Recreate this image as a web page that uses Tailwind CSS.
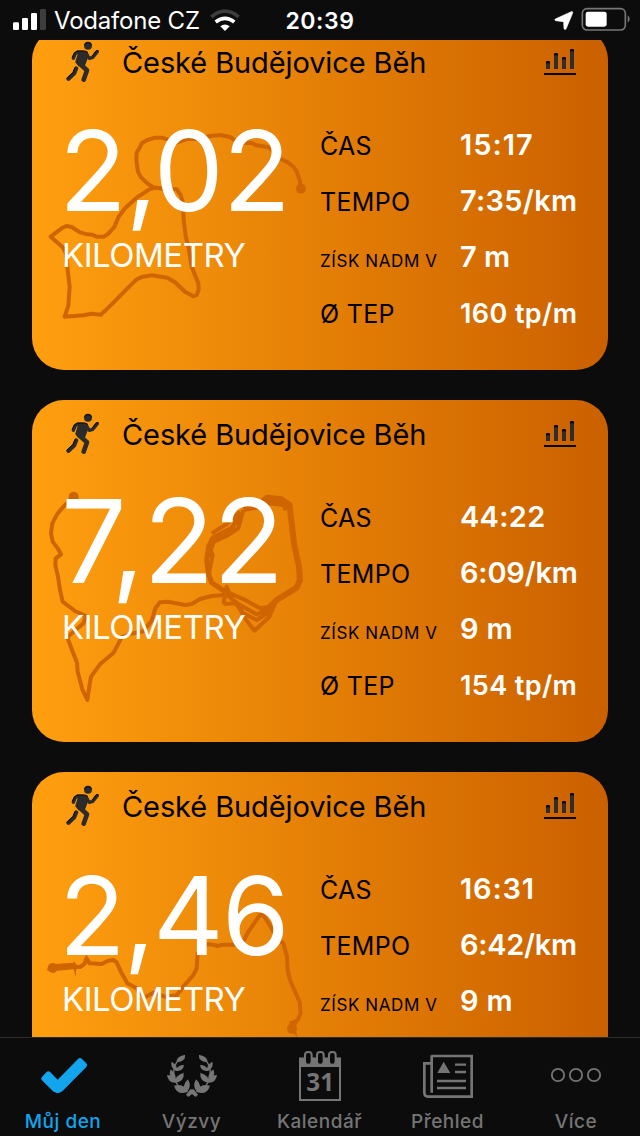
<!DOCTYPE html>
<html lang="cs">
<head>
    <meta charset="UTF-8">
    <meta name="viewport" content="width=device-width, initial-scale=1.0">
    <title>Můj den</title>
    <script src="https://cdn.jsdelivr.net/npm/@tailwindcss/browser@4"></script>
</head>
<body class="bg-[#0c0c0c] font-['Inter',sans-serif]">

    <!-- Shared icons -->
    <svg class="hidden">
        <symbol id="runner" viewBox="30 24 105 126">
            <g fill="#2b2b2b" stroke="#2b2b2b" stroke-linecap="round" stroke-linejoin="round">
                <circle cx="99" cy="38" r="12" stroke="none"/>
                <path d="M75 58 L90 60 L97 66 L86 94 L72 94 L66 86 Z" stroke-width="10"/>
                <path d="M84 58 L68 58 L61 62 L55 76" fill="none" stroke-width="10"/>
                <path d="M92 60 L103 76 L113 73 L127 56" fill="none" stroke-width="10"/>
                <path d="M74 92 L96 112 L86 140" fill="none" stroke-width="14"/>
                <path d="M64 106 L58 121 L40 138" fill="none" stroke-width="12"/>
            </g>
            <g fill="none" stroke="#050505" stroke-width="3" stroke-linecap="round">
                <path d="M89 34 Q99 23 109 34"/>
                <path d="M52 73 L58 60 L66 54 L90 54 L98 58"/>
                <path d="M113 68 L124 53 L129 53"/>
                <path d="M60 104 L54 118 L36 136"/>
            </g>
        </symbol>
        <symbol id="bars" viewBox="39 30 102 84">
            <path d="M48 93 V73 Q48 69 54 69 Q60 69 60 73 V93 Z M72 93 V49 Q72 45 78 45 Q84 45 84 49 V93 Z M96 93 V61 Q96 57 102 57 Q108 57 108 61 V93 Z M120 93 V37 Q120 33 126 33 Q132 33 132 37 V93 Z" fill="#2e2e2e"/>
            <path d="M48 77 V73 Q48 69 54 69 Q60 69 60 73 V77 L54 75 Z M72 53 V49 Q72 45 78 45 Q84 45 84 49 V53 L78 51 Z M96 65 V61 Q96 57 102 57 Q108 57 108 61 V65 L102 63 Z M120 41 V37 Q120 33 126 33 Q132 33 132 37 V41 L126 39 Z" fill="#050505"/>
            <path d="M42 105 H138 V111 H42 Z" fill="#000"/>
        </symbol>
    </svg>

    <div class="w-[640px] h-[1136px] flex flex-col overflow-hidden">

        <!-- Status bar -->
        <header class="h-10 shrink-0 grid grid-cols-[275px_90px_1fr] items-center text-white">
            <div class="flex items-center pl-[13px]">
                <svg class="w-[33px] h-[22px] -mt-px" viewBox="39 27 99 66">
                    <rect x="39" y="67" width="18" height="23" rx="4" fill="#fff"/>
                    <rect x="66" y="54" width="18" height="36" rx="4" fill="#fff"/>
                    <rect x="93" y="39" width="18" height="51" rx="4" fill="#fff"/>
                    <rect x="120" y="27" width="18" height="63" rx="4" fill="#3d3d3d"/>
                </svg>
                <span class="ml-2 mt-0.5 w-[147px] text-[24px] leading-none whitespace-nowrap tracking-[-0.2px]">Vodafone CZ</span>
                <svg class="ml-[9px] w-[30px] h-[24px] mt-0.5" viewBox="631 27 90 72" fill="none">
                    <path d="M635 51 Q676 16 717 51" stroke="#3d3d3d" stroke-width="11"/>
                    <path d="M648 66 Q676 44 704 66" stroke="#fff" stroke-width="11"/>
                    <path d="M662 79 Q676 68 690 79 L676 93 Z" fill="#fff"/>
                </svg>
            </div>
            <div class="mt-0.5 text-center text-[23px] leading-none font-semibold tracking-[0.6px]">20:39</div>
            <div class="flex items-center justify-end pr-[10px]">
                <svg class="w-[76px] h-[24px] -mt-0.5" viewBox="700 22 228 72">
                    <path d="M752 36 Q757 35 756 40 L736 88 Q732 91 730 87 L729 66 L705 63 Q700 61 704 58 Z" fill="#fff" stroke="#fff" stroke-width="2"/>
                    <rect x="785" y="27" width="129" height="64" rx="14" fill="none" stroke="#777" stroke-width="5"/>
                    <rect x="795" y="36" width="63" height="45" rx="7" fill="#fff"/>
                    <path d="M921 47 Q927 52 927 58 Q927 64 921 69 Z" fill="#777"/>
                </svg>
            </div>
        </header>

        <!-- Activities -->
        <main class="flex-1 min-h-0 overflow-hidden px-8">
            <div class="-mt-3 flex flex-col gap-[30px]">

                <article class="relative h-[342px] shrink-0 overflow-hidden rounded-[32px] bg-linear-to-r from-[#ff9f0f] to-[#ca6000]">
                    <svg class="absolute -left-0.5 top-[82px] w-[290px] h-[220px]" viewBox="0 0 870 660" fill="none" stroke="#cf6500" stroke-width="12" stroke-linejoin="round">
                        <path d="M812 234 L810 213 L800 185 L790 170 L775 158 L752 147 L735 125 L715 112 L680 106 L665 99 L640 99 L625 98 L600 81 L570 75 L540 78 L510 87 L470 87 L440 98 L415 89 L395 83 L375 83 L352 90 L335 100 L328 115 L320 128 L319 150 L324 185 L333 202 L352 220 L370 232 L400 236 L440 238 L452 255 L458 275 L461 330 L467 378 L475 410 L485 470 L505 520 L506 540 L500 555 L490 559 L465 545 L435 517 L412 503 L365 496 L335 501 L320 508 L295 532 L245 583 L213 614 L185 611 L160 616 L104 620 L115 587 L119 530 L113 480 L108 430 L98 412 L62 380 L98 353 L110 348 L125 351 L150 367 L172 373 L188 374 L200 380 L222 380 L235 371 L253 351 L266 320 L285 295 L320 263 L358 238 L380 232"/>
                        <circle cx="813" cy="236" r="15" fill="#cf6500" stroke="none"/>
                    </svg>
                    <div class="relative h-full flex flex-col">
                        <div class="h-[80px] shrink-0 flex items-start pl-[33px] pr-[31px]">
                            <svg class="mt-[13px] w-[35px] h-[42px]"><use href="#runner"/></svg>
                            <h2 class="mt-5 ml-[22px] flex-1 text-[29px] leading-none tracking-[-0.1px] whitespace-nowrap text-black">České Budějovice Běh</h2>
                            <svg class="mt-[20px] w-[34px] h-[28px]"><use href="#bars"/></svg>
                        </div>
                        <div class="flex">
                            <div class="w-[288px] pl-[30px] text-white">
                                <div class="h-[131px] -ml-[3px] text-[111px] leading-[125px] tracking-[-1px] whitespace-nowrap">2,02</div>
                                <div class="text-[33px] leading-none tracking-[-0.5px]">KILOMETRY</div>
                            </div>
                            <div class="flex-1 pt-[22px] whitespace-nowrap leading-none">
                                <div class="h-14 flex items-baseline"><span class="w-[140px] text-[25px] tracking-[0.3px]">ČAS</span><span class="text-[29px] leading-none font-semibold tracking-[1px] text-white">15:17</span></div>
                                <div class="h-14 flex items-baseline"><span class="w-[140px] text-[25px] tracking-[0.3px]">TEMPO</span><span class="text-[29px] leading-none font-semibold tracking-[0.3px] text-white">7:35/km</span></div>
                                <div class="h-14 flex items-baseline"><span class="w-[140px] text-[17px] tracking-[0.6px]">ZÍSK NADM V</span><span class="text-[29px] leading-none font-semibold text-white">7 m</span></div>
                                <div class="h-14 pt-0.5 flex items-baseline"><span class="w-[140px] text-[25px] tracking-[0.3px]">Ø TEP</span><span class="text-[27px] leading-none font-semibold tracking-[0.4px] text-white">160 tp/m</span></div>
                            </div>
                        </div>
                    </div>
                </article>

                <article class="relative h-[342px] shrink-0 overflow-hidden rounded-[32px] bg-linear-to-r from-[#ff9f0f] to-[#ca6000]">
                    <svg class="absolute -left-0.5 top-0 w-[290px] h-[310px]" viewBox="0 0 870 930" fill="none" stroke="#cf6500" stroke-width="12" stroke-linejoin="round">
                        <path d="M131 291 L102 318 L83 340 L67 370 L63 400 L68 425 L83 445 L93 463 L77 475 L76 495 L84 530 L90 570 L98 605 L135 633 L168 648 L160 670 L112 712 L126 750 L141 788 L143 815 L157 868 L172 900 L178 860 L183 830 L210 793 L251 758 L275 712 L300 702 L340 694 L365 662 L376 625 L390 607 L415 605 L465 615 L485 612 L510 597 L545 588 L585 585"/>
                        <circle cx="131" cy="290" r="15" fill="#cf6500" stroke="none"/>
                        <path d="M640 325 L690 310 L712 293 L755 298 L779 315 L785 370 L792 430 L807 500 L810 540 L800 563 L740 600 L715 625" stroke-width="18"/>
                        <path d="M640 325 L690 318 L712 305 L765 312 L770 330" stroke-width="20"/>
                        <path d="M632 345 L605 385 L548 415 L536 440 L530 480 L535 520 L545 548 L585 575" stroke-width="15"/>
                        <path d="M640 330 L625 385 L590 408 L552 425 L535 470 M545 400 L590 372 L630 335 M537 520 L548 465 L536 430 M585 573 L650 602 L690 625 L720 620 M585 580 L625 612 L680 643 L715 628 M580 612 L590 560 L605 595 L640 640 L680 660 L712 640 L735 615 M580 612 L620 610 L645 655 L673 692 L718 651 L735 610"/>
                    </svg>
                    <div class="relative h-full flex flex-col">
                        <div class="h-[80px] shrink-0 flex items-start pl-[33px] pr-[31px]">
                            <svg class="mt-[13px] w-[35px] h-[42px]"><use href="#runner"/></svg>
                            <h2 class="mt-5 ml-[22px] flex-1 text-[29px] leading-none tracking-[-0.1px] whitespace-nowrap text-black">České Budějovice Běh</h2>
                            <svg class="mt-[20px] w-[34px] h-[28px]"><use href="#bars"/></svg>
                        </div>
                        <div class="flex">
                            <div class="w-[288px] pl-[30px] text-white">
                                <div class="h-[131px] -ml-px text-[116px] leading-[122px] tracking-[-1px] whitespace-nowrap">7,22</div>
                                <div class="text-[33px] leading-none tracking-[-0.5px]">KILOMETRY</div>
                            </div>
                            <div class="flex-1 pt-[22px] whitespace-nowrap leading-none">
                                <div class="h-14 flex items-baseline"><span class="w-[140px] text-[25px] tracking-[0.3px]">ČAS</span><span class="text-[29px] leading-none font-semibold tracking-[0.3px] text-white">44:22</span></div>
                                <div class="h-14 flex items-baseline"><span class="w-[140px] text-[25px] tracking-[0.3px]">TEMPO</span><span class="text-[29px] leading-none font-semibold tracking-[-0.2px] text-white">6:09/km</span></div>
                                <div class="h-14 flex items-baseline"><span class="w-[140px] text-[17px] tracking-[0.6px]">ZÍSK NADM V</span><span class="text-[29px] leading-none font-semibold tracking-[0.3px] text-white">9 m</span></div>
                                <div class="h-14 pt-0.5 flex items-baseline"><span class="w-[140px] text-[25px] tracking-[0.3px]">Ø TEP</span><span class="text-[27px] leading-none font-semibold tracking-[0.4px] text-white">154 tp/m</span></div>
                            </div>
                        </div>
                    </div>
                </article>

                <article class="relative h-[342px] shrink-0 overflow-hidden rounded-[32px] bg-linear-to-r from-[#ff9f0f] to-[#ca6000]">
                    <svg class="absolute -left-0.5 -top-0.5 w-[290px] h-[270px]" viewBox="0 0 870 810" fill="none" stroke="#cf6500" stroke-width="12" stroke-linejoin="round">
                        <path d="M68 593 L100 590 L150 591 L163 582 L168 568 L178 580 L215 582 L235 572 L250 570 L260 577 L275 610 L292 640 L320 655 L345 682 L370 668 L405 680 L440 676 L460 650 L490 615 L500 595 L503 550 L530 523 L550 524 L562 528 L580 524 L615 524 L640 515 L655 485 L690 435 L700 435 L725 475 L740 505 L760 520 L771 560 L773 600 L780 630 L809 696 L812 730 L803 750 L785 760"/>
                        <circle cx="68" cy="594" r="15" fill="#cf6500" stroke="none"/>
                        <circle cx="786" cy="776" r="15" fill="#cf6500" stroke="none"/>
                        <path d="M50 600 L62 584 L74 608 Z M68 583 L131 578 L131 572 L140 584 L137 622 L131 598 L68 604 Z M168 553 L182 572 L160 586 Z M776 755 L808 748 L796 772 L802 802 L788 786 Z" fill="#cf6500" stroke="none"/>
                    </svg>
                    <div class="relative h-full flex flex-col">
                        <div class="h-[80px] shrink-0 flex items-start pl-[33px] pr-[31px]">
                            <svg class="mt-[13px] w-[35px] h-[42px]"><use href="#runner"/></svg>
                            <h2 class="mt-5 ml-[22px] flex-1 text-[29px] leading-none tracking-[-0.1px] whitespace-nowrap text-black">České Budějovice Běh</h2>
                            <svg class="mt-[20px] w-[34px] h-[28px]"><use href="#bars"/></svg>
                        </div>
                        <div class="flex">
                            <div class="w-[288px] pl-[30px] text-white">
                                <div class="h-[131px] -ml-[3px] text-[109px] leading-[127px] tracking-[-1.8px] whitespace-nowrap">2,46</div>
                                <div class="text-[33px] leading-none tracking-[-0.5px]">KILOMETRY</div>
                            </div>
                            <div class="flex-1 pt-[22px] whitespace-nowrap leading-none">
                                <div class="h-14 flex items-baseline"><span class="w-[140px] text-[25px] tracking-[0.3px]">ČAS</span><span class="text-[29px] leading-none font-semibold tracking-[0.8px] text-white">16:31</span></div>
                                <div class="h-14 flex items-baseline"><span class="w-[140px] text-[25px] tracking-[0.3px]">TEMPO</span><span class="text-[29px] leading-none font-semibold tracking-[-0.3px] text-white">6:42/km</span></div>
                                <div class="h-14 flex items-baseline"><span class="w-[140px] text-[17px] tracking-[0.6px]">ZÍSK NADM V</span><span class="text-[29px] leading-none font-semibold tracking-[0.3px] text-white">9 m</span></div>
                            </div>
                        </div>
                    </div>
                </article>

            </div>
        </main>

        <!-- Tab bar -->
        <nav class="h-[99px] shrink-0 grid grid-cols-5 border-t border-[#2c2c2c] bg-[#0c0c0c] text-[19px] leading-none font-medium tracking-[0.5px] text-[#757575]">
            <a class="flex flex-col items-center pt-3 text-[#12a5ee]">
                <svg class="w-[52px] h-[52px]" viewBox="114 60 156 156">
                    <path d="M126 141 L139 127 Q145 121 151 127 L173 149 L234 87 Q240 81 246 87 L259 100 Q264 105 259 111 L187 184 Q173 195 159 184 L126 151 Q121 146 126 141 Z" fill="#12a5ee"/>
                </svg>
                <span class="mt-2.5 mr-0.5">Můj den</span>
            </a>
            <a class="flex flex-col items-center pt-3">
                <svg class="w-[52px] h-[52px]" viewBox="498 60 156 156" fill="#757575">
                    <g id="branch">
                        <path d="M555 74 Q558 93 531 97 Q526 80 555 74 Z"/>
                        <path d="M515 95 Q535 106 529 123 Q509 112 515 95 Z M552 105 Q549 126 525 122 Q533 105 552 105 Z"/>
                        <path d="M512 118 Q532 134 526 155 Q503 139 512 118 Z M501 135 Q526 135 532 158 Q505 162 501 135 Z M551 128 Q554 154 526 158 Q524 136 551 128 Z"/>
                        <path d="M522 167 Q552 158 564 185 Q532 199 522 167 Z M564 148 Q577 170 560 187 Q542 166 564 148 Z"/>
                        <path d="M533 92 Q505 135 542 177" fill="none" stroke="#757575" stroke-width="4"/>
                    </g>
                    <use href="#branch" transform="translate(1152 0) scale(-1 1)"/>
                    <path d="M571 178 H581 L594 194 L587 201 L576 192 L565 201 L558 194 Z"/>
                </svg>
                <span class="mt-2.5 mr-px">Výzvy</span>
            </a>
            <a class="flex flex-col items-center pt-3">
                <svg class="w-[52px] h-[52px]" viewBox="882 60 156 156">
                    <rect x="900" y="86" width="120" height="124" fill="none" stroke="#757575" stroke-width="6"/>
                    <rect x="897" y="83" width="126" height="28" fill="#757575"/>
                    <g fill="#0c0c0c" stroke="#757575" stroke-width="6">
                        <rect x="915" y="66" width="20" height="38" rx="9"/>
                        <rect x="951" y="66" width="20" height="38" rx="9"/>
                        <rect x="987" y="66" width="20" height="38" rx="9"/>
                    </g>
                    <text x="961" y="184" text-anchor="middle" font-family="Noto Sans" font-size="73" font-weight="700" fill="#757575">31</text>
                </svg>
                <span class="mt-2.5 mr-px">Kalendář</span>
            </a>
            <a class="flex flex-col items-center pt-3">
                <svg class="w-[52px] h-[52px]" viewBox="1266 60 156 156" fill="none" stroke="#757575">
                    <path d="M1295 78 H1415 V200 H1284 Q1273 199 1273 188 V100 H1293 M1295 76 V188" stroke-width="8"/>
                    <path d="M1365 104 H1398 M1365 126 H1398 M1311 153 H1398 M1311 174 H1398" stroke-width="7"/>
                    <path d="M1312 129 L1331 95 L1351 129 Z" fill="#757575" stroke="none"/>
                </svg>
                <span class="mt-2.5 mr-px">Přehled</span>
            </a>
            <a class="flex flex-col items-center pt-3">
                <svg class="w-[52px] h-[52px]" viewBox="1650 60 156 156" fill="none" stroke="#757575" stroke-width="5.5">
                    <circle cx="1674" cy="135" r="18.5"/>
                    <circle cx="1728" cy="135" r="18.5"/>
                    <circle cx="1782" cy="135" r="18.5"/>
                </svg>
                <span class="mt-2.5">Více</span>
            </a>
        </nav>
    </div>

</body>
</html>
